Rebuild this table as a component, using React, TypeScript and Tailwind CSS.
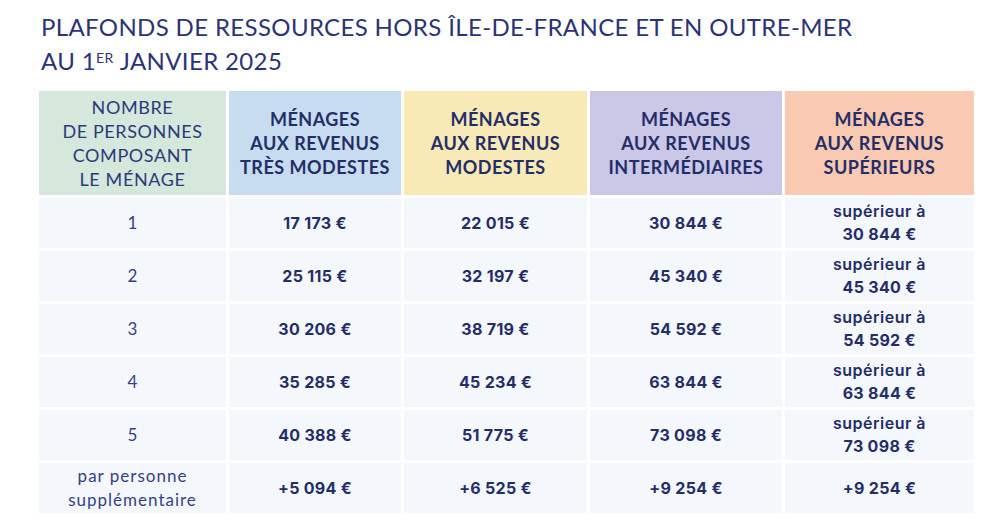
import React from "react";

const rows = [
  { n: "1", a: "17 173 €", b: "22 015 €", c: "30 844 €", d: "30 844 €" },
  { n: "2", a: "25 115 €", b: "32 197 €", c: "45 340 €", d: "45 340 €" },
  { n: "3", a: "30 206 €", b: "38 719 €", c: "54 592 €", d: "54 592 €" },
  { n: "4", a: "35 285 €", b: "45 234 €", c: "63 844 €", d: "63 844 €" },
  { n: "5", a: "40 388 €", b: "51 775 €", c: "73 098 €", d: "73 098 €" },
];

const cell = "bg-[#f4f7fb] h-[50px] flex flex-col items-center justify-center text-center";
const num = "font-['Inter',sans-serif] font-bold text-[16px] tracking-[0.3px] text-[#232d68]";
const head = "h-[104px] flex items-center justify-center text-center text-[18px] leading-[24px] font-bold tracking-[0.5px] text-[#232d68]";

export default function App() {
  return (
    <div className="w-[997px] h-[531px] bg-white overflow-hidden font-['Lato',sans-serif] text-[#252f6a]">
      <div className="pl-[41px] pt-[10px] text-[24px] leading-[34px] text-[#2a3476] tracking-[0.36px]">
        <div>PLAFONDS DE RESSOURCES HORS ÎLE-DE-FRANCE ET EN OUTRE-MER</div>
        <div>
          AU 1<span className="text-[14px] relative top-[-7px] leading-none tracking-[0.5px]">ER</span> JANVIER 2025
        </div>
      </div>
      <div className="ml-[39px] mt-[13px] grid grid-cols-[187px_172px_183px_192px_189px] gap-x-[3px] gap-y-[3px]">
        <div className="bg-[#d6e8db] h-[104px] flex items-center justify-center text-center text-[18px] leading-[24px] tracking-[0.6px] text-[#2c3a7c]">
          <div>NOMBRE<br />DE PERSONNES<br />COMPOSANT<br />LE MÉNAGE</div>
        </div>
        <div className={"bg-[#c7ddef] " + head}>
          <div>MÉNAGES<br />AUX REVENUS<br />TRÈS MODESTES</div>
        </div>
        <div className={"bg-[#f7eab7] " + head}>
          <div>MÉNAGES<br />AUX REVENUS<br />MODESTES</div>
        </div>
        <div className={"bg-[#cac7e7] " + head}>
          <div>MÉNAGES<br />AUX REVENUS<br />INTERMÉDIAIRES</div>
        </div>
        <div className={"bg-[#f9c9b1] " + head}>
          <div>MÉNAGES<br />AUX REVENUS<br />SUPÉRIEURS</div>
        </div>
        {rows.map((r) => (
          <React.Fragment key={r.n}>
            <div className={cell + " text-[17px] text-[#34418a]"}>{r.n}</div>
            <div className={cell + " " + num}>{r.a}</div>
            <div className={cell + " " + num}>{r.b}</div>
            <div className={cell + " " + num}>{r.c}</div>
            <div className={cell + " " + num + " leading-[23px]"}>
              <div className="font-semibold tracking-[0.5px]">supérieur à</div>
              <div>{r.d}</div>
            </div>
          </React.Fragment>
        ))}
        <div className={cell + " text-[17px] leading-[24px] tracking-[1px] text-[#34418a]"}>
          <div>par personne</div>
          <div>supplémentaire</div>
        </div>
        <div className={cell + " " + num}>+5 094 €</div>
        <div className={cell + " " + num}>+6 525 €</div>
        <div className={cell + " " + num}>+9 254 €</div>
        <div className={cell + " " + num}>+9 254 €</div>
      </div>
    </div>
  );
}
